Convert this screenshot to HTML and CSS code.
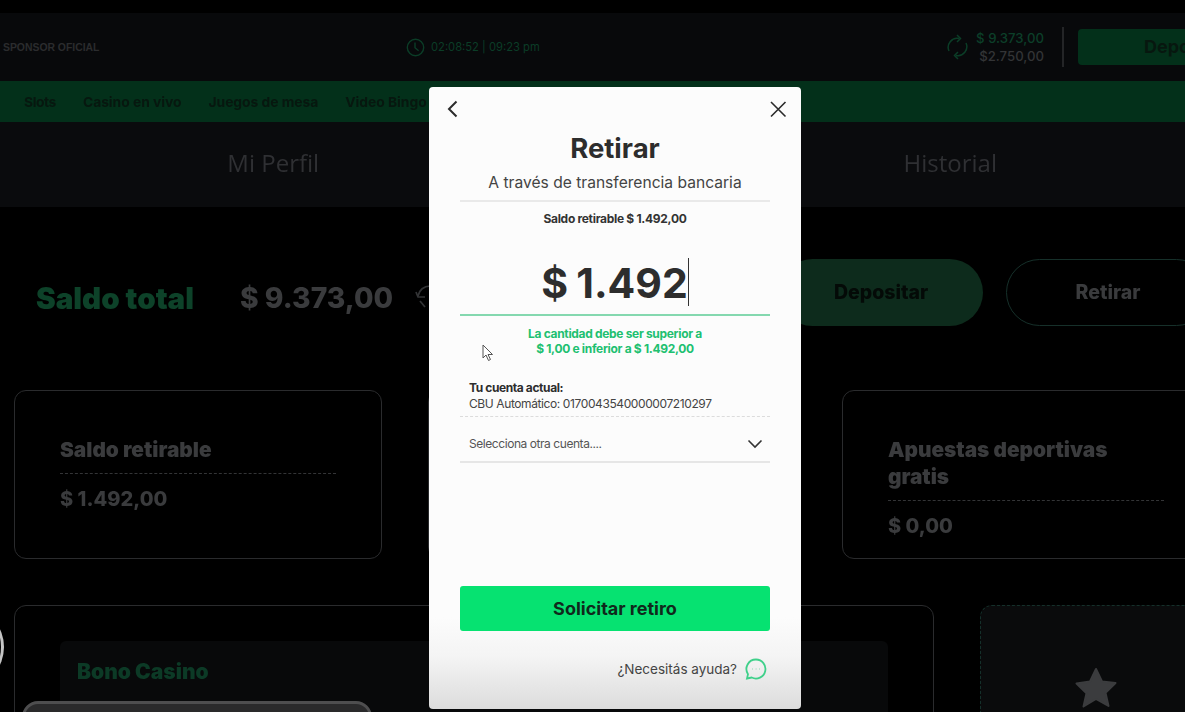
FILE: index.html
```html
<!DOCTYPE html>
<html lang="es">
<head>
    <meta charset="UTF-8">
    <title>Retirar</title>
    <link rel="stylesheet" href="styles.css">
</head>
<body>
    <div class="page">
        <div class="top-strip"></div>

        <header class="header">
            <div class="sponsor">SPONSOR OFICIAL</div>
            <div class="clock">
                <svg width="19" height="19" viewBox="0 0 19 19" fill="none" stroke="#0b3d27" stroke-width="1.4">
                    <circle cx="9.5" cy="9.5" r="8.2"/>
                    <path d="M9 4.5v5.2l3.6 3"/>
                </svg>
                <span>02:08:52 | 09:23 pm</span>
            </div>
            <div class="wallet">
                <svg width="21" height="26" viewBox="0 0 21 26" fill="none" stroke="#0b3d27" stroke-width="1.5">
                    <path d="M2 17A9 9 0 0 1 12 4.500"/>
                    <path d="M10 1l3.500 3.400L10 8"/>
                    <path d="M19 9a9 9 0 0 1-10 12.500"/>
                    <path d="M11 18l-3.500 3.500L11 25"/>
                </svg>
                <div class="wallet-values">
                    <div class="wallet-main">$ 9.373,00</div>
                    <div class="wallet-bonus">$2.750,00</div>
                </div>
            </div>
            <div class="header-sep"></div>
            <div class="header-btn">Depositar</div>
        </header>

        <nav class="nav">
            <span>Slots</span>
            <span>Casino en vivo</span>
            <span>Juegos de mesa</span>
            <span>Video Bingo</span>
        </nav>

        <div class="tabs">
            <span>Mi Perfil</span>
            <span>Mis Bonos</span>
            <span>Historial</span>
        </div>

        <section class="balance">
            <div class="balance-label">Saldo total</div>
            <div class="balance-value">$ 9.373,00</div>
            <svg class="balance-refresh" width="22" height="26" viewBox="0 0 22 26" fill="none" stroke="#333436" stroke-width="1.7">
                <path d="M15 2C9 2 4 6 3 12"/>
                <path d="M1 8l2 5h7"/>
                <path d="M5 17l5 6"/>
            </svg>
            <div class="pill pill-fill">Depositar</div>
            <div class="pill pill-line">Retirar</div>
        </section>

        <section class="cards">
            <div class="card">
                <h3>Saldo retirable</h3>
                <div class="card-value">$ 1.492,00</div>
            </div>
            <div class="card">
                <h3>Saldo en juego</h3>
                <div class="card-value">$ 0,00</div>
            </div>
            <div class="card">
                <h3>Apuestas deportivas gratis</h3>
                <div class="card-value">$ 0,00</div>
            </div>
        </section>

        <section class="bonus-row">
            <div class="bonus-box">
                <div class="bonus-inner">Bono Casino</div>
            </div>
            <div class="star-box">
                <svg width="44" height="42" viewBox="0 0 44 42" fill="#3b3c3e" stroke="#3b3c3e" stroke-width="2" stroke-linejoin="round">
                    <path d="M22 2l6 12.500 13.500 1.500-10 9.700 3 13.300L22 32l-12.500 7.500 3-13.300-10-9.700L16 14.500z"/>
                </svg>
            </div>
        </section>
    </div>

    <div class="side-arc"></div>
    <div class="dock"></div>

    <div class="modal">
        <div class="modal-top">
            <svg width="22" height="22" viewBox="0 0 22 22" fill="none" stroke="#2b2b2b" stroke-width="2">
                <path d="M14.500 3.500L7 11l7.500 7.500"/>
            </svg>
            <svg width="22" height="22" viewBox="0 0 22 22" fill="none" stroke="#2b2b2b" stroke-width="1.600">
                <path d="M4 4l14.500 14.500M18.500 4L4 18.500"/>
            </svg>
        </div>
        <h1>Retirar</h1>
        <div class="subtitle">A través de transferencia bancaria</div>
        <div class="available">Saldo retirable $ 1.492,00</div>
        <div class="amount"><span class="amount-text">$ 1.492</span></div>
        <div class="amount-note">La cantidad debe ser superior a<br>$ 1,00 e inferior a $ 1.492,00</div>
        <div class="account">
            <strong>Tu cuenta actual:</strong>
            <div>CBU Automático: 0170043540000007210297</div>
        </div>
        <div class="account-select">
            <span>Selecciona otra cuenta....</span>
            <svg width="16" height="10" viewBox="0 0 16 10" fill="none" stroke="#333" stroke-width="1.600">
                <path d="M1.500 1.500L8 8l6.500-6.500"/>
            </svg>
        </div>
        <div class="spacer"></div>
        <button class="submit">Solicitar retiro</button>
        <div class="help">
            <span>¿Necesitás ayuda?</span>
            <svg width="22" height="22" viewBox="0 0 22 22" fill="none" stroke="#3fd08a" stroke-width="1.800">
                <path d="M11 1.500a9.500 9.500 0 1 1-4.300 18L2 20.500l1-4.300A9.500 9.500 0 0 1 11 1.500z"/>
                <path d="M7 11h.5M10.800 11h.5M14.500 11h.5" stroke="#8fdcb6"/>
            </svg>
        </div>
    </div>

    <!-- mouse pointer caught in the capture -->
    <svg class="pointer" width="12" height="18" viewBox="0 0 12 18" fill="#fff" stroke="#555" stroke-width="1">
        <path d="M1 1v13l3-3 2.500 5.500 2-1L6 10.500h4.500z"/>
    </svg>
</body>
</html>
```

FILE: styles.css
```css
* {
    margin: 0;
    padding: 0;
    box-sizing: border-box;
}

body {
    font-family: Inter, "Liberation Sans", sans-serif;
    background: #000;
    height: 712px;
    overflow: hidden;
    position: relative;
}

/* page behind the modal is slightly out of focus */
.page {
    height: 712px;
    overflow: hidden;
    filter: blur(0.5px);
}

.top-strip {
    height: 13px;
    background: #000;
}

/* header */
.header {
    height: 68px;
    background: #08090b;
    display: flex;
    align-items: center;
    padding-left: 3px;
}

.sponsor {
    width: 403px;
    font-family: "Liberation Sans", sans-serif;
    font-size: 10.4px;
    font-weight: 700;
    color: #2b2c2e;
}

.clock {
    display: flex;
    align-items: center;
    gap: 6px;
    font-size: 11.2px;
    color: #0b3d27;
}

.wallet {
    margin-left: auto;
    display: flex;
    align-items: center;
    gap: 8px;
}

.wallet-values {
    text-align: right;
    font-size: 13.2px;
    line-height: 18px;
    font-weight: 500;
}

.wallet-main {
    color: #0c3f29;
}

.wallet-bonus {
    color: #333436;
}

.header-sep {
    width: 2px;
    height: 40px;
    margin-left: 18px;
    background: #242527;
}

.header-btn {
    width: 167px;
    height: 36px;
    margin-left: 14px;
    margin-right: -60px;
    padding-left: 66px;
    background: #03301a;
    border-radius: 4px;
    font-size: 18px;
    line-height: 36px;
    font-weight: 700;
    color: #07170f;
    white-space: nowrap;
    overflow: hidden;
}

/* green menu */
.nav {
    height: 41px;
    background: #03301a;
    display: flex;
    align-items: center;
    gap: 27px;
    padding-left: 24px;
    font-size: 13.8px;
    font-weight: 700;
    color: #07170f;
}

.nav span:first-child {
    letter-spacing: -0.4px;
}

.tabs {
    height: 85px;
    padding-bottom: 4px;
    background: #0a0b0d;
    display: grid;
    grid-template-columns: repeat(3, 338.5px);
    padding-left: 104px;
    align-items: center;
    justify-items: center;
    font-family: "Open Sans", sans-serif;
    font-size: 24px;
    color: #2f3033;
}

/* balance row */
.balance {
    margin-top: 52px;
    height: 67px;
    display: flex;
    align-items: center;
    padding-left: 36px;
    white-space: nowrap;
}

.balance-label {
    flex: none;
    width: 204px;
    padding-top: 10px;
    font-size: 29.6px;
    font-weight: 900;
    color: #0d4229;
}

.balance-value {
    flex: none;
    width: 175px;
    padding-top: 10px;
    font-size: 28.3px;
    font-weight: 800;
    color: #3a3b3d;
}

.balance-refresh {
    flex: none;
    margin-top: 9px;
}

.pill {
    flex: none;
    width: 204px;
    height: 67px;
    border-radius: 34px;
    font-size: 19.5px;
    line-height: 65px;
    font-weight: 800;
    text-align: center;
}

.pill-fill {
    margin-left: 342px;
    background: #0d2b1c;
    line-height: 67px;
    color: #040a07;
}

.pill-line {
    margin-left: 23px;
    border: 1px solid #16302a;
    color: #3a3b3d;
}

/* cards */
.cards {
    margin-top: 64px;
    padding-left: 14px;
    display: grid;
    grid-template-columns: repeat(3, 368px);
    gap: 46px;
}

.card {
    height: 169px;
    border: 1px solid #2a2b2d;
    border-radius: 12px;
    padding: 45px 45px 0;
    display: flex;
    flex-direction: column;
    justify-content: flex-start;
    color: #3a3b3d;
}

.card h3 {
    font-size: 20.8px;
    line-height: 27px;
    font-weight: 900;
    padding-bottom: 10px;
    border-bottom: 1px dashed #333436;
}

.card-value {
    margin-top: 12px;
    font-size: 20px;
    line-height: 26px;
    font-weight: 800;
}

/* bottom row */
.bonus-row {
    margin-top: 46px;
    padding-left: 14px;
    display: flex;
    gap: 46px;
}

.bonus-box {
    flex: none;
    width: 920px;
    height: 140px;
    border: 1px solid #2a2b2d;
    border-radius: 12px;
    padding: 35px 45px 0;
}

.bonus-inner {
    height: 100px;
    background: #08090a;
    border-radius: 6px;
    padding: 18px 17px 0;
    font-size: 21px;
    font-weight: 900;
    color: #0c3a26;
}

.star-box {
    flex: none;
    width: 260px;
    height: 140px;
    background: #0a0b0c;
    border: 1px dashed #14302a;
    border-radius: 12px;
    padding: 61px 0 0 93px;
}

/* things lying over the page */
.side-arc {
    position: absolute;
    left: -62px;
    top: 610px;
    width: 66px;
    height: 74px;
    border-radius: 50%;
    background: #000;
    border-right: 3px solid #c4c4c4;
}

.dock {
    position: absolute;
    left: 22px;
    top: 701px;
    width: 350px;
    height: 40px;
    background: #2a2a2b;
    border: 3px solid #4e4e4f;
    border-radius: 16px;
}

.modal {
    position: absolute;
    left: 429px;
    top: 87px;
    width: 372px;
    height: 622px;
    display: flex;
    flex-direction: column;
    padding: 0 31px 28px;
    border-radius: 4px;
    background: linear-gradient(#fcfcfc 0, #fcfcfc 530px, #f4f4f4 570px, #dcdcdc 622px);
    color: #2d2d2d;
}

.modal-top {
    height: 43px;
    padding-top: 11px;
    margin: 0 -19px 0 -18px;
    display: flex;
    justify-content: space-between;
    align-items: flex-start;
}

.modal h1 {
    font-size: 27.5px;
    line-height: 36px;
    font-weight: 700;
    text-align: center;
}

.subtitle {
    margin-top: 6px;
    padding-bottom: 6px;
    border-bottom: 2px solid #e9e9e9;
    font-size: 15.6px;
    line-height: 22px;
    text-align: center;
    color: #444;
}

.available {
    margin-top: 9px;
    font-size: 12px;
    line-height: 16px;
    font-weight: 700;
    letter-spacing: -0.3px;
    text-align: center;
    color: #333;
}

.amount {
    margin-top: 26px;
    padding-bottom: 2px;
    border-bottom: 2px solid #84d8af;
    height: 63px;
    text-align: center;
    font-size: 41px;
    line-height: 60px;
    font-weight: 700;
}

.amount-text {
    display: inline-block;
    border-right: 1px solid #333;
    height: 48px;
    line-height: 50px;
    word-spacing: -1.5px;
}

.amount-note {
    margin-top: 10px;
    font-size: 12px;
    line-height: 15px;
    font-weight: 700;
    letter-spacing: -0.32px;
    text-align: center;
    color: #20c070;
}

.account {
    margin-top: 24px;
    padding: 0 0 4px 9px;
    border-bottom: 1px dashed #dcdcdc;
    font-size: 12px;
    line-height: 16px;
    letter-spacing: -0.4px;
    color: #444;
}

.account strong {
    color: #2d2d2d;
}

.account-select {
    height: 46px;
    padding: 9px 7px 0 9px;
    border-bottom: 2px solid #e6e6e6;
    display: flex;
    align-items: center;
    justify-content: space-between;
    font-size: 12px;
    letter-spacing: -0.44px;
    color: #555;
}

.spacer {
    flex: 1;
}

.submit {
    height: 45px;
    border: none;
    border-radius: 3px;
    background: #06e271;
    font-family: inherit;
    font-size: 18px;
    font-weight: 700;
    color: #10291c;
}

.help {
    margin-top: 26px;
    height: 24px;
    padding-right: 3px;
    display: flex;
    align-items: center;
    justify-content: flex-end;
    gap: 8px;
    font-size: 13.5px;
    color: #444;
}

.pointer {
    position: absolute;
    left: 482px;
    top: 344px;
}
```
